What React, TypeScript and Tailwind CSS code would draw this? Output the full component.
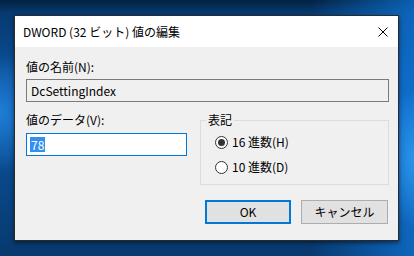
import React from "react";

const font = "font-['Noto_Sans_CJK_JP','Noto_Sans',sans-serif]";

function Radio({ checked, label }: { checked: boolean; label: string }) {
  return (
    <div className="flex items-center h-[16px]">
      <span className="w-[13px] h-[13px] rounded-full border border-[#333333] bg-white flex items-center justify-center">
        {checked && <span className="w-[7px] h-[7px] rounded-full bg-[#333333]" />}
      </span>
      <span className="ml-[4px] text-[12px] leading-[16px] text-black">{label}</span>
    </div>
  );
}

export default function App() {
  return (
    <div
      className={`w-[414px] h-[256px] overflow-hidden pt-[15px] pl-[14px] ${font} bg-[radial-gradient(ellipse_40px_60px_at_0%_44%,rgba(40,140,235,0.7),transparent),radial-gradient(ellipse_30px_70px_at_100%_62%,rgba(50,160,245,0.8),transparent),linear-gradient(90deg,rgba(0,0,0,0)_0%,rgba(0,0,0,0)_75%,rgba(16,120,220,0.7)_100%),linear-gradient(180deg,#03213f_0%,#063a70_5%,#0b5099_30%,#0c5aa8_45%,#0a4a8c_65%,#08396f_100%)]`}
    >
      <div className="w-[385px] h-[226px] border border-[#2b2b2b] flex flex-col shadow-[0_2px_4px_rgba(0,0,0,0.5)]">
        <div className="h-[31px] bg-white flex items-center pl-[8px] pr-[10px] shrink-0">
          <span className="text-[12px] leading-[16px] text-black flex-1">DWORD (32 ビット) 値の編集</span>
          <svg width="10" height="10" viewBox="0 0 10 10" className="block">
            <path d="M0.5 0.5 L9.5 9.5 M9.5 0.5 L0.5 9.5" stroke="#000" strokeWidth="1" />
          </svg>
        </div>
        <div className="flex-1 bg-[#f0f0f0] pl-[11px] pr-[9px] pt-[12px]">
          <div className="text-[12px] leading-[16px] text-black">値の名前(N):</div>
          <div className="mt-[4px] h-[23px] border border-[#7a7a7a] bg-[#f0f0f0] flex items-center pl-[4px] text-[12px] text-black">
            DcSettingIndex
          </div>
          <div className="mt-[10px] flex">
            <div className="w-[161px]">
              <div className="text-[12px] leading-[16px] text-black">値のデータ(V):</div>
              <div className="mt-[5px] h-[23px] border border-[#0078d7] bg-white flex items-center pl-[3px]">
                <span className="bg-[#3390f0] text-white text-[12px] leading-[15px] px-[1px]">78</span>
              </div>
            </div>
            <fieldset className="ml-[13px] flex-1 border border-[#dcdcdc] pl-[14px] pr-[5px] pt-[6px] pb-[9px] min-w-0">
              <legend className="ml-[-9px] px-[2px] text-[12px] leading-[16px] text-black">表記</legend>
              <Radio checked label="16 進数(H)" />
              <div className="mt-[9px]">
                <Radio checked={false} label="10 進数(D)" />
              </div>
            </fieldset>
          </div>
          <div className="mt-[15px] flex justify-end gap-[10px] pr-[1px]">
            <div className="w-[86px] h-[24px] bg-[#e1e1e1] border-2 border-[#0078d7] flex items-center justify-center text-[12px] text-black">
              OK
            </div>
            <div className="w-[87px] h-[24px] bg-[#e1e1e1] border border-[#adadad] flex items-center justify-center text-[12px] text-black">
              キャンセル
            </div>
          </div>
        </div>
      </div>
    </div>
  );
}
